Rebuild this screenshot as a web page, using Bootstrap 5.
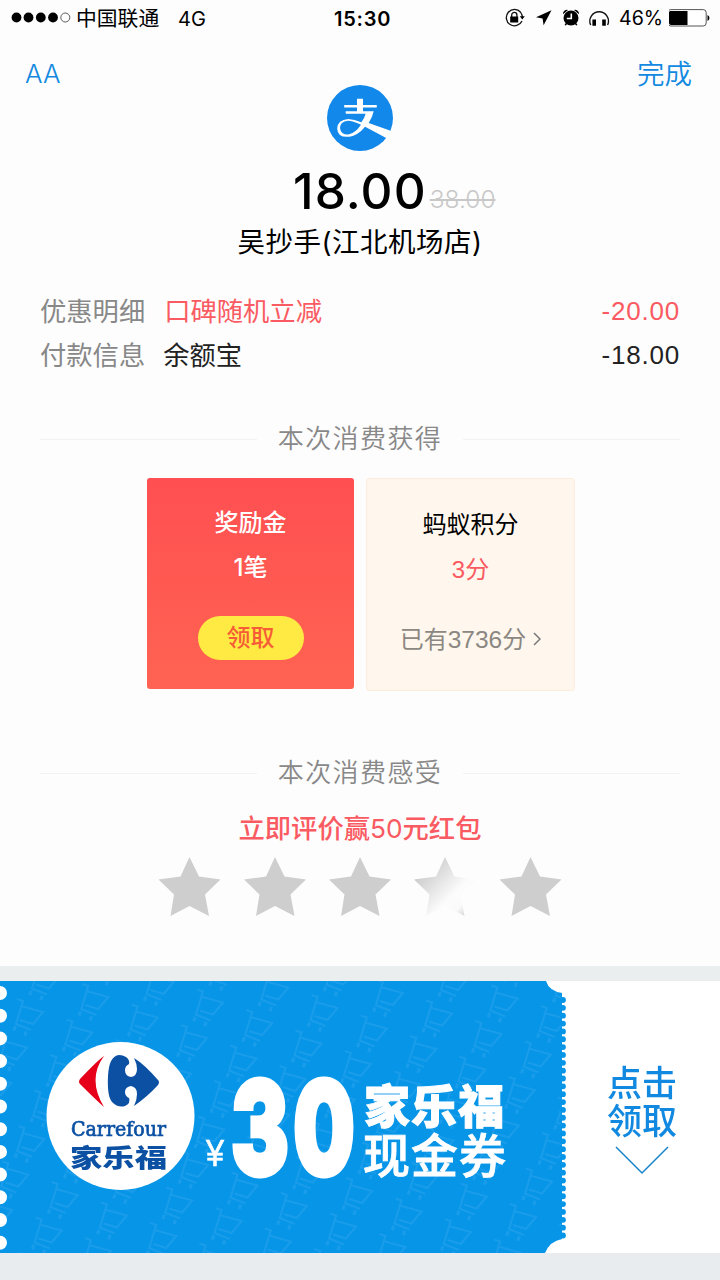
<!DOCTYPE html>
<html lang="zh-CN">
<head>
<meta charset="utf-8">
<meta name="viewport" content="width=device-width, initial-scale=1">
<title>支付结果</title>
<link href="https://cdn.jsdelivr.net/npm/bootstrap@5.3.0/dist/css/bootstrap.min.css" rel="stylesheet">
<style>
body{width:720px;height:1280px;background:#fdfdfd;color:#000;overflow:hidden;font-family:Inter,"Noto Sans CJK SC",sans-serif;line-height:1;white-space:nowrap}
svg{display:block;flex:none}
.statusbar{height:36px;font-size:20px;padding-top:1px}
.statusbar svg{margin-top:-1px}
.statusbar .clock{font-weight:600;font-size:20px;letter-spacing:.75px}
.topnav{height:49px;font-size:27.5px;color:#1289e0;font-weight:350}
.amount{font-size:49.5px;font-weight:500;letter-spacing:1.1px;line-height:50px}
.was{font-size:24.5px;font-weight:300;color:#c8c8c8;line-height:30px}
.shop{font-size:27.5px;line-height:36px;letter-spacing:.5px}
.info{font-size:26.3px;line-height:43.5px;color:#222}
.info .lab,.rule{color:#888}
.info .num{letter-spacing:.8px;margin-right:-1px}
.red{color:#fa5a61}
.num{font-family:"Liberation Sans";font-size:26px}
.rule{font-size:26px;letter-spacing:1.4px;line-height:30px;font-weight:350}
.rule i{height:1px;background:#f2f2f2;width:217px}
.tile{height:212px;font-size:24px;border-radius:3px;line-height:30px}
.tile-bonus{width:207px;height:211px;color:#fff;background:linear-gradient(#ff4f52,#ff6352)}
.tile-points{width:209px;height:213px;background:#fff7ed;border:1px solid #feeddd}
.claim{width:106px;height:44px;background:#ffea43;color:#f65c36;font-weight:500}
.band{background:#eaeeee;height:15px}
.coupon{height:272px;background:#fff}
.coupon-art{width:567px;height:272px}
.go{width:150px;color:#1289e0;font-size:35px;line-height:37.5px;font-weight:500}
.foot{height:27px;background:#e9ecef}
</style>
</head>
<body class="d-flex flex-column">
<header class="statusbar d-flex align-items-center flex-shrink-0">
  <svg width="76" height="36"><g><circle cx="16.5" cy="17.5" r="4.9"/><circle cx="28.5" cy="17.5" r="4.9"/><circle cx="40.8" cy="17.5" r="4.9"/><circle cx="53" cy="17.5" r="4.9"/></g><circle cx="65.3" cy="17.5" r="4.5" fill="none" stroke="#333" stroke-width=".8"/></svg>
  <span style="width:102px;font-size:20.8px;padding-top:2px">中国联通</span><span style="width:156px">4G</span>
  <span class="clock flex-grow-1">15:30</span>
  <svg width="115" height="36" viewBox="498 0 115 36">
    <g fill="none" stroke="#111" stroke-width="1.3"><path d="M520.7 12.2A8.2 8.2 0 1 0 522 21M517.3 10A8.2 8.2 0 0 1 522.3 17"/><path d="M511.7 17v-2a2.6 2.6 0 0 1 5.2 0v2"/></g>
    <path d="M510.2 16.5h8v6h-8zM519.8 16.3h5l-2.5 3.3z"/>
    <path d="M551.5 10.3L536 17.3l6.6 1.3 1 6.7z"/>
    <circle cx="571" cy="18" r="7.5"/><path d="M563 14.2a4 4 0 0 1 5-4.3zM579 14.2a4 4 0 0 0-5-4.3zM566.5 22l-2 3 1.2.6 2-2.2zM575.5 22l2 3-1.2.6-2-2.2z"/><path d="M571.3 13.5v5h-4.5" fill="none" stroke="#fff" stroke-width="1.6"/>
    <path d="M590.7 25A9.3 9.3 0 1 1 607.6 25" fill="none" stroke="#111" stroke-width="1.4"/><path d="M592.4 19.5h3.6v6.3h-3.6zM602.2 19.5h3.6v6.3h-3.6z"/>
  </svg>
  <span style="width:50px;margin-left:6px;font-size:19.6px;padding-top:1px">46%</span>
  <svg width="51" height="36" viewBox="669 0 51 36"><rect x="667.8" y="9.6" width="38.4" height="16.4" rx="3" fill="#fff" stroke="#555" stroke-width="1"/><path d="M670 11h17.5v14H671q-2 0-2-2V12z"/><path d="M707.5 15v6q2-1 2-3t-2-3z"/></svg>
</header>
<nav class="topnav d-flex justify-content-between flex-shrink-0">
  <span style="margin:25px 0 0 25px;font-size:26px;font-weight:300">AA</span><span style="margin:25px 28px 0 0">完成</span>
</nav>
<main class="flex-shrink-0" style="height:881px">
  <svg class="mx-auto" width="66" height="67" viewBox="327 85 66 67"><circle cx="360" cy="118" r="33" fill="#1288ea"/>
  <g fill="#fff"><path d="M357 98.8h6v6.2h13.8v2.4H363v3.8h10.7q-1.4 6.3-5 11.7l24 8.7-4.6 7.4-23-12.3q-7 8.5-15.6 10-12 1.2-12.3-8.3.3-8.4 11-9.4 6 .1 13.2 3.3 3-4 4.3-8.6h-20v-2.5H357v-3.8h-12.8V105H357zM361 124.7q-8.5-4-13-4-8 .8-8 7.2.8 6.9 8.5 6.6 6.8-1.3 12.5-9.8z"/></g></svg>
  <div class="d-flex" style="margin:14px 0 0 293px"><span class="amount">18.00</span><del class="was" style="margin:18px 0 0 3px">38.00</del></div>
  <div class="shop text-center" style="margin-top:8px">吴抄手(江北机场店)</div>
  <div class="info" style="margin:30px 41px 0 40px">
    <div class="d-flex"><span class="lab">优惠明细</span><span class="red flex-grow-1" style="margin-left:19px">口碑随机立减</span><span class="red num">-20.00</span></div>
    <div class="d-flex"><span class="lab">付款信息</span><span class="flex-grow-1" style="margin-left:18px">余额宝</span><span class="num">-18.00</span></div>
  </div>
  <div class="rule d-flex align-items-center justify-content-between" style="margin:47px 40px 0"><i></i><span>本次消费获得</span><i></i></div>
  <div class="d-flex" style="margin:24px 0 0 147px;gap:12px">
    <section class="tile tile-bonus d-flex flex-column align-items-center"><span class="fw-medium" style="margin-top:30px">奖励金</span><span style="margin-top:15px;font-weight:500">1笔</span><button class="btn rounded-pill border-0 p-0 claim" style="font-size:24px;margin-top:33px">领取</button></section>
    <section class="tile tile-points d-flex flex-column align-items-center"><span style="margin-top:31px">蚂蚁积分</span><span class="red" style="margin-top:15px"><span class="num" style="font-size:24px">3</span>分</span><span class="d-flex align-items-center" style="color:#8b8782;margin-top:40px">已有<span class="num" style="font-size:24.5px">3736</span>分<svg style="margin:-3px 0 0 7px" width="8" height="14" fill="none" stroke="#777" stroke-width="1.5"><path d="M1 1l6 6-6 6"/></svg></span></section>
  </div>
  <div class="rule d-flex align-items-center justify-content-between" style="margin:67px 40px 0"><i></i><span>本次消费感受</span><i></i></div>
  <div class="red text-center" style="font-size:26.3px;line-height:30px;margin-top:26px;font-weight:500">立即评价赢<span style="font-weight:400">50</span>元红包</div>
  <svg style="margin:13px 0 0 158px" width="404" height="62" fill="#cecece"><defs><linearGradient id="shine" x1=".1" y1=".15" x2=".95" y2=".95"><stop offset=".1" stop-color="#cecece"/><stop offset=".62" stop-color="#fcfcfc"/><stop offset=".8" stop-color="#fafafa"/><stop offset="1" stop-color="#ccc"/></linearGradient><path id="star" d="M31.5 0L41 19.5 62.5 22.5 47 37.5 51 59 31.5 49 12.5 59 16 37.5.5 22.5 22.5 19.5z"/></defs><use href="#star"/><use href="#star" x="85.5"/><use href="#star" x="170.5"/><use href="#star" x="255.5" fill="url(#shine)"/><use href="#star" x="341"/></svg>
</main>
<div class="band flex-shrink-0"></div>
<section class="coupon d-flex flex-shrink-0">
  <svg class="coupon-art" viewBox="0 981 567 272">
    <path fill="#0795e8" d="M0 981H546Q549 991 562 993V1239Q550 1241 545 1253H0z"/>
    <defs><g id="cart" fill="none" stroke="#35a8ec" stroke-width="2.2"><path d="M-9-15l6 2-7 23 15 6M-5-8l22 6-10 12-13-4"/><path d="M-13 14l3 1M-2 19l3 1" stroke-width="4.5"/></g><clipPath id="ticket"><path d="M0 981H546Q549 991 562 993V1239Q550 1241 545 1253H0z"/></clipPath></defs>
    <g id="carts" opacity=".4" clip-path="url(#ticket)"></g>
    <path d="M0 993v250" stroke="#fff" stroke-width="14" stroke-linecap="round" stroke-dasharray="0 22.7" fill="none"/>
    <path d="M563 1000v238" stroke="#0795e8" stroke-width="5.8" stroke-linecap="round" stroke-dasharray="0 7.85"/>
    <circle cx="120.5" cy="1116" r="74" fill="#fff"/>
    <path fill="#e60019" d="M104 1056q-6 4-24 23-2 3 0 5 15 15 24 23-17-28 0-51z"/>
    <path fill="#0b50a3" d="M119 1055q-10 1-11 21-1 20 4 26 6 6 13 4 6-3 4-8-4-2-4-6 0-5 6-6 6 1 6 8 0 6-3 12 13-9 24-21 2-3 0-5-14-16-24-22 3 6 3 11 0 7-6 8-6-1-6-7 0-4 4-6 1-4-3-7-3-2-7-2z"/>
    <g fill="#0b50a3"><text x="71" y="1136" font-family="DejaVu Serif,serif" font-size="20" textLength="95" lengthAdjust="spacingAndGlyphs" stroke="#0b50a3" stroke-width=".7">Carrefour</text>
    <text x="70" y="1167" font-family="Noto Sans CJK SC,sans-serif" font-weight="900" font-size="25" textLength="97" lengthAdjust="spacingAndGlyphs">家乐福</text></g>
    <g fill="#fff"><text x="206" y="1166" font-family="Liberation Sans,sans-serif" font-size="36" textLength="18" lengthAdjust="spacingAndGlyphs" stroke="#fff" stroke-width=".6">¥</text>
    <text transform="translate(231 1174.5) scale(.665 1)" font-family="Inter,sans-serif" font-weight="900" font-size="130" textLength="186" stroke="#fff" stroke-width="5">30</text>
    <g font-family="Noto Sans CJK SC,sans-serif"><text x="364" y="1123" font-weight="900" font-size="46" textLength="140" stroke="#fff">家乐福</text><text x="363" y="1173" font-weight="500" font-size="47" textLength="143" stroke="#fff" stroke-width=".8">现金券</text></g></g>
  </svg>
  <div class="go d-flex flex-column align-items-center"><span style="margin-top:84px">点击<br>领取</span><svg style="margin-top:6px" width="54" height="30" fill="none" stroke="#1984ca" stroke-width="1.5"><path d="M1 1l26 26L53 1"/></svg></div>
</section>
<footer class="foot flex-shrink-0"></footer>
<script>
// shopping carts repeated on a slanted lattice behind the coupon
let carts='';
for(let i=-2;i<16;i++)for(let j=-8;j<14;j++){const x=26+i*49.3-j*16,y=1014+i*20.5+j*35.5;if(x>-20&&x<590&&y>960&&y<1275)carts+=`<use href="#cart" x="${x}" y="${y}"/>`}
document.getElementById('carts').innerHTML=carts;
</script>
<script src="https://cdn.jsdelivr.net/npm/bootstrap@5.3.0/dist/js/bootstrap.bundle.min.js"></script>
</body>
</html>
